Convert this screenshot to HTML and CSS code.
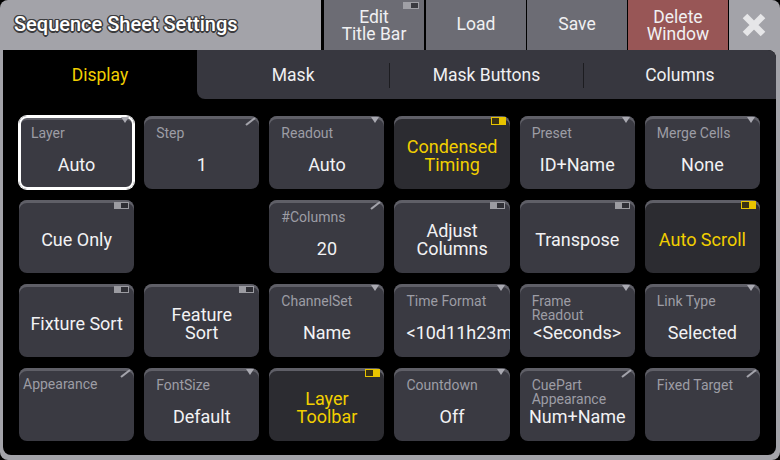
FILE: index.html
```html
<!DOCTYPE html>
<html>
<head>
<meta charset="utf-8">
<link rel="stylesheet" href="styles.css">
</head>
<body>
<div class="window">
  <header class="titlebar">
    <div class="title">Sequence Sheet Settings</div>
    <div class="tbtn edit"><span class="tg tg-title"></span>Edit<br>Title Bar</div>
    <div class="tbtn load one">Load</div>
    <div class="tbtn one">Save</div>
    <div class="tbtn del">Delete<br>Window</div>
    <div class="close">
      <svg width="24" height="24" viewBox="0 0 24 24"><path d="M3 3L21 21M21 3L3 21" stroke="#e6e6e8" stroke-width="6.5" fill="none"/></svg>
    </div>
  </header>
  <div class="frame">
    <div class="panel">
      <nav class="tabs">
        <div class="tab active">Display</div>
        <div class="tabrest">
          <div class="tab">Mask</div>
          <i class="vsep"></i>
          <div class="tab">Mask Buttons</div>
          <i class="vsep"></i>
          <div class="tab">Columns</div>
        </div>
      </nav>
      <div class="grid">
        <div class="btn lab sel"><span class="dd"></span><div class="l">Layer</div><div class="v">Auto</div></div>
        <div class="btn lab"><svg class="pen" width="11" height="9" viewBox="0 0 11 9"><path d="M1 8L10 1" stroke="#a3a3ab" stroke-width="2.2"/></svg><div class="l">Step</div><div class="v">1</div></div>
        <div class="btn lab"><span class="dd"></span><div class="l">Readout</div><div class="v">Auto</div></div>
        <div class="btn tgl on"><span class="tg y"></span>Condensed<br>Timing</div>
        <div class="btn lab"><span class="dd"></span><div class="l">Preset</div><div class="v">ID+Name</div></div>
        <div class="btn lab"><span class="dd"></span><div class="l">Merge Cells</div><div class="v">None</div></div>

        <div class="btn tgl"><span class="tg"></span>Cue Only</div>
        <div class="empty"></div>
        <div class="btn lab"><svg class="pen" width="11" height="9" viewBox="0 0 11 9"><path d="M1 8L10 1" stroke="#a3a3ab" stroke-width="2.2"/></svg><div class="l">#Columns</div><div class="v">20</div></div>
        <div class="btn tgl"><span class="tg"></span>Adjust<br>Columns</div>
        <div class="btn tgl"><span class="tg"></span>Transpose</div>
        <div class="btn tgl on"><span class="tg y"></span>Auto Scroll</div>

        <div class="btn tgl"><span class="tg"></span>Fixture Sort</div>
        <div class="btn tgl"><span class="tg"></span>Feature<br>Sort</div>
        <div class="btn lab"><span class="dd"></span><div class="l">ChannelSet</div><div class="v">Name</div></div>
        <div class="btn lab"><span class="dd"></span><div class="l">Time Format</div><div class="v clip">&lt;10d11h23m</div></div>
        <div class="btn lab"><span class="dd"></span><div class="l">Frame<br>Readout</div><div class="v">&lt;Seconds&gt;</div></div>
        <div class="btn lab"><span class="dd"></span><div class="l">Link Type</div><div class="v">Selected</div></div>

        <div class="btn lab"><svg class="pen" width="11" height="9" viewBox="0 0 11 9"><path d="M1 8L10 1" stroke="#a3a3ab" stroke-width="2.2"/></svg><div class="l l-tight">Appearance</div></div>
        <div class="btn lab"><span class="dd"></span><div class="l">FontSize</div><div class="v">Default</div></div>
        <div class="btn tgl on"><span class="tg y"></span>Layer<br>Toolbar</div>
        <div class="btn lab"><span class="dd"></span><div class="l">Countdown</div><div class="v">Off</div></div>
        <div class="btn lab"><svg class="pen" width="11" height="9" viewBox="0 0 11 9"><path d="M1 8L10 1" stroke="#a3a3ab" stroke-width="2.2"/></svg><div class="l">CuePart<br>Appearance</div><div class="v">Num+Name</div></div>
        <div class="btn lab"><svg class="pen" width="11" height="9" viewBox="0 0 11 9"><path d="M1 8L10 1" stroke="#a3a3ab" stroke-width="2.2"/></svg><div class="l">Fixed Target</div></div>
      </div>
    </div>
  </div>
</div>
</body>
</html>
```
FILE: styles.css
```css
* { box-sizing: border-box; }
html, body { margin: 0; background: #000; }
body {
  width: 780px;
  height: 460px;
  overflow: hidden;
  font-family: Roboto, "Liberation Sans", sans-serif;
}
.titlebar { display: flex; height: 50px; }
.title {
  width: 321px;
  background: #a3a3a9;
  border-top-left-radius: 8px;
  color: #fff;
  font-size: 20px;
  font-weight: 500;
  padding-left: 14px;
  padding-bottom: 2px;
  display: flex;
  align-items: center;
  text-shadow: 1px 1px 0 #3c3c3e, -1px -1px 0 #3c3c3e, 1px -1px 0 #3c3c3e, -1px 1px 0 #3c3c3e,
               0 1.5px 0 #3c3c3e, 0 -1.5px 0 #3c3c3e, 1.5px 0 0 #3c3c3e, -1.5px 0 0 #3c3c3e;
}
.tbtn {
  position: relative;
  width: 100px;
  margin-left: 1px;
  background: #6c6c74;
  color: #f0f0f2;
  font-size: 17.5px;
  line-height: 17px;
  display: flex;
  align-items: center;
  justify-content: center;
  text-align: center;
  padding-top: 2px;
}
.tbtn.one { padding-top: 0; padding-bottom: 2px; }
.tbtn.edit { margin-left: 3px; }
.tbtn.load { margin-left: 2px; }
.tbtn.del { background: #985656; }
.close {
  flex: 1;
  margin-left: 1px;
  background: #a3a3a9;
  border-top-right-radius: 8px;
  display: flex;
  align-items: center;
  justify-content: center;
  padding-right: 2px;
}
.frame {
  background: #a3a3a9;
  padding: 0 4px 5px 3px;
  border-radius: 0 0 8px 8px;
  height: 410px;
}
.panel {
  background: #000;
  height: 405px;
  border-radius: 0 8px 8px 8px;
  overflow: hidden;
}
.tabs { display: flex; height: 49px; }
.tab {
  flex: 1;
  display: flex;
  align-items: center;
  justify-content: center;
  font-size: 17.5px;
  color: #f0f0f2;
  padding-top: 1px;
}
.tab.active { flex: 0 0 194px; color: #f2cf00; }
.tabrest {
  flex: 1;
  display: flex;
  align-items: center;
  background: #37373f;
  border-bottom-left-radius: 8px;
}
.tabrest .tab { align-self: stretch; }
.vsep { width: 1px; height: 25px; background: #1c1c20; margin-top: 2px; }
.grid {
  display: grid;
  grid-template-columns: repeat(6, 1fr);
  grid-template-rows: repeat(4, 73px);
  gap: 11px 10px;
  padding: 17px 16px 0;
}
.btn {
  position: relative;
  background: #3a3a42;
  border-radius: 8px;
  box-shadow: inset 0 3px 0 #5f5f67;
  display: flex;
  flex-direction: column;
  color: #f2f2f4;
  font-size: 18px;
  line-height: 20px;
  overflow: hidden;
}
.btn.sel {
  overflow: visible;
  box-shadow: inset 0 0 0 2px #fff, 0 0 0 1px #fff, inset 0 4px 0 #5f5f67;
}
.lab .l {
  font-size: 14px;
  line-height: 14px;
  color: #9d9da5;
  padding: 10px 12px 0;
}
.lab .l-tight { padding: 9px 4px 0; }
.lab .v {
  margin-top: auto;
  padding-bottom: 14px;
  text-align: center;
  white-space: nowrap;
}
.lab .v.clip { text-align: left; padding-left: 12px; overflow: hidden; }
.tgl {
  align-items: center;
  justify-content: center;
  text-align: center;
  padding-top: 7px;
  line-height: 18px;
}
.btn.on { background: #2c2c31; color: #f2cf00; }
.dd {
  position: absolute;
  top: 1px;
  right: 5px;
  width: 0;
  height: 0;
  border-left: 4px solid transparent;
  border-right: 4px solid transparent;
  border-top: 6px solid #a9a9b1;
}
.pen { position: absolute; top: 1px; right: 3px; }
.tg {
  position: absolute;
  top: 2px;
  right: 5px;
  width: 15px;
  height: 7px;
  padding: 1px;
  background: #9b9ba1;
  display: flex;
  justify-content: flex-end;
}
.tg::after { content: ""; width: 7px; height: 5px; background: #2f2f35; }
.tg.y { background: #e8c400; justify-content: flex-start; top: 1px; right: 4px; height: 8px; }
.tg.y::after { background: #3a3214; height: 6px; }
.tg-title { top: 2px; right: 5px; width: 16px; height: 7px; background: #a0a0a6; }
.tg-title::after { background: #3a3a40; }
```
